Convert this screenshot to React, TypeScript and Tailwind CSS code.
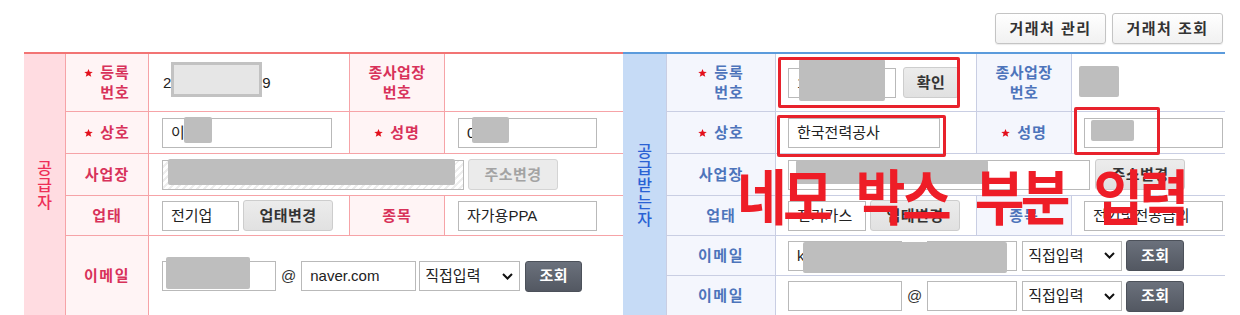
import React from "react";

const FONT = "font-['Liberation_Sans','Noto_Sans_CJK_KR',sans-serif]";

function StarIcon() {
  return (
    <svg width="9" height="8" viewBox="0 0 10 9" className="shrink-0 mr-[7px]">
      <polygon
        points="5,0 6.3,3.1 9.8,3.3 7.1,5.4 8.1,8.8 5,6.9 1.9,8.8 2.9,5.4 0.2,3.3 3.7,3.1"
        fill="#e3101c"
      />
    </svg>
  );
}

type Side = "L" | "R";

function LabelCell({
  side,
  lines,
  star,
  last,
  tracking,
}: {
  side: Side;
  lines: string[];
  star?: boolean;
  last?: boolean;
  tracking?: string;
}) {
  const cls =
    side === "L"
      ? "bg-[#fff4f5] border-[#f6a3a7] text-[#d8325a]"
      : "bg-[#f4f6fd] border-[#c9cee3] text-[#4d74bb]";
  return (
    <div
      className={`flex items-center justify-center border-r ${last ? "" : "border-b"} ${cls}`}
    >
      <div className="flex items-start">
        {star && (
          <span className="flex h-[20px] items-center">
            <StarIcon />
          </span>
        )}
        <div
          className={`text-center text-[15px] font-bold leading-[20px] ${tracking ?? "tracking-[1px]"}`}
        >
          {lines.map((l) => (
            <div key={l}>{l}</div>
          ))}
        </div>
      </div>
    </div>
  );
}

function ValueCell({
  side,
  children,
  span3,
  lastCol,
  last,
  pad,
}: {
  side: Side;
  children?: React.ReactNode;
  span3?: boolean;
  lastCol?: boolean;
  last?: boolean;
  pad?: string;
}) {
  const b = side === "L" ? "border-[#f6a3a7]" : "border-[#c9cee3]";
  return (
    <div
      className={`flex items-center bg-white ${pad ?? (side === "L" ? "pl-[13px]" : "pl-[12px]")} ${span3 ? "col-span-3" : ""} ${lastCol ? "" : "border-r"} ${last ? "" : "border-b"} ${b}`}
    >
      {children}
    </div>
  );
}

function Input({
  w,
  text,
  hatched,
}: {
  w: string;
  text?: string;
  hatched?: boolean;
}) {
  return (
    <div
      className={`flex h-[30px] shrink-0 items-center border border-[#b9b9b9] pl-[8px] text-[15px] leading-[18px] text-[#222] ${w} ${
        hatched
          ? "bg-[repeating-linear-gradient(135deg,#ffffff_0px,#ffffff_3px,#ededed_3px,#ededed_5px)]"
          : "bg-white"
      }`}
    >
      {text}
    </div>
  );
}

function GrayBtn({
  w,
  text,
  disabled,
  ml,
}: {
  w: string;
  text: string;
  disabled?: boolean;
  ml: string;
}) {
  return (
    <div
      className={`flex h-[31px] shrink-0 items-center justify-center rounded-[3px] border text-[15px] font-bold leading-[18px] tracking-[0.5px] ${w} ${ml} ${
        disabled
          ? "border-[#d4d4d4] bg-[#ebebeb] text-[#a3a3a3]"
          : "border-[#cdcdcd] bg-gradient-to-b from-[#ececec] to-[#e1e1e1] text-[#333]"
      }`}
    >
      {text}
    </div>
  );
}

function Select({ w, ml }: { w: string; ml: string }) {
  return (
    <div
      className={`flex h-[30px] shrink-0 items-center justify-between border border-[#b9b9b9] bg-white pl-[5px] pr-[6px] text-[15px] leading-[18px] text-[#222] ${w} ${ml}`}
    >
      <span>직접입력</span>
      <svg width="11" height="7" viewBox="0 0 11 7">
        <path d="M1 1 L5.5 5.5 L10 1" stroke="#111" strokeWidth="2" fill="none" />
      </svg>
    </div>
  );
}

function DarkBtn({ w, ml }: { w: string; ml: string }) {
  return (
    <div
      className={`flex h-[31px] shrink-0 items-center justify-center rounded-[3px] border border-[#4c515a] bg-gradient-to-b from-[#6b717c] to-[#535862] text-[15px] font-bold leading-[18px] tracking-[0.5px] text-white ${w} ${ml}`}
    >
      조회
    </div>
  );
}

function At() {
  return <span className="mx-[5px] text-[15px] leading-[18px] text-[#333]">@</span>;
}

function VHeader({ side, chars }: { side: Side; chars: string[] }) {
  const cls =
    side === "L"
      ? "bg-[#ffdce1] border-[#f6a3a7] text-[#ee2f57] row-span-5"
      : "bg-[#c6dbf6] border-[#c9cee3] text-[#2a62d4] row-span-6";
  return (
    <div className={`flex flex-col items-center justify-center border-r ${cls}`}>
      {chars.map((c, i) => (
        <div key={i} className="text-[16px] font-medium leading-[17px]">
          {c}
        </div>
      ))}
    </div>
  );
}

function Censor({
  x,
  y,
  w,
  h,
}: {
  x: number;
  y: number;
  w: number;
  h: number;
}) {
  return (
    <div
      className="absolute rounded-[2px] bg-[#bebebe]"
      style={{ left: x, top: y, width: w, height: h }}
    />
  );
}

function RedRect({
  x,
  y,
  w,
  h,
}: {
  x: number;
  y: number;
  w: number;
  h: number;
}) {
  return (
    <div
      className="absolute rounded-[2px] border-[3px] border-[#e8222c]"
      style={{ left: x, top: y, width: w, height: h }}
    />
  );
}

export default function App() {
  return (
    <div className={`relative h-[315px] w-[1240px] overflow-hidden bg-white ${FONT}`}>
      {/* top buttons */}
      <div className="flex h-[52px] items-start justify-end gap-[6px] pr-[17px] pt-[13px]">
        {["거래처 관리", "거래처 조회"].map((t) => (
          <div
            key={t}
            className="flex h-[31px] w-[111px] items-center justify-center rounded-[3px] border border-[#c4c4c4] bg-gradient-to-b from-white to-[#f1f1f1] text-[15px] font-bold leading-[18px] tracking-[1.5px] text-[#333] shadow-[0_1px_1px_rgba(0,0,0,0.08)]"
          >
            {t}
          </div>
        ))}
      </div>

      <div className="ml-[24px] flex">
        {/* LEFT: 공급자 */}
        <div className="grid w-[599px] grid-cols-[42px_83px_201px_95px_178px] grid-rows-[58px_42px_42px_40px_80px] border-t-2 border-[#f27474]">
          <VHeader side="L" chars={["공", "급", "자"]} />

          <LabelCell side="L" star lines={["등록", "번호"]} />
          <ValueCell side="L" pad="pl-[14px]">
            <span className="text-[15px] leading-[18px] text-[#222]">2</span>
            <span className="mt-[-7px] h-[35px] w-[91px] shrink-0 border-[3px] border-[#c2c2c2] bg-[#e6e6e6]" />
            <span className="text-[15px] leading-[18px] text-[#222]">9</span>
          </ValueCell>
          <LabelCell side="L" lines={["종사업장", "번호"]} tracking="tracking-[0.5px]" />
          <ValueCell side="L" lastCol />

          <LabelCell side="L" star lines={["상호"]} />
          <ValueCell side="L">
            <Input w="w-[170px]" text="이" />
          </ValueCell>
          <LabelCell side="L" star lines={["성명"]} />
          <ValueCell side="L" lastCol>
            <Input w="w-[139px]" text="0" />
          </ValueCell>

          <LabelCell side="L" lines={["사업장"]} />
          <ValueCell side="L" span3 lastCol>
            <Input w="w-[302px]" hatched text="" />
            <GrayBtn w="w-[90px]" ml="ml-[4px]" text="주소변경" disabled />
          </ValueCell>

          <LabelCell side="L" lines={["업태"]} />
          <ValueCell side="L">
            <Input w="w-[77px]" text="전기업" />
            <GrayBtn w="w-[90px]" ml="ml-[4px]" text="업태변경" />
          </ValueCell>
          <LabelCell side="L" lines={["종목"]} />
          <ValueCell side="L" lastCol>
            <Input w="w-[139px]" text="자가용PPA" />
          </ValueCell>

          <LabelCell side="L" lines={["이메일"]} last tracking="tracking-[1.5px]" />
          <ValueCell side="L" span3 lastCol last>
            <Input w="w-[114px]" />
            <At />
            <Input w="w-[115px]" text="naver.com" />
            <Select w="w-[101px]" ml="ml-[3px]" />
            <DarkBtn w="w-[57px]" ml="ml-[5px]" />
          </ValueCell>
        </div>

        {/* RIGHT: 공급받는자 */}
        <div className="grid w-[602px] grid-cols-[44px_109px_201px_95px_153px] grid-rows-[58px_42px_42px_40px_40px_40px] border-t-2 border-[#5b9bdc]">
          <VHeader side="R" chars={["공", "급", "받", "는", "자"]} />

          <LabelCell side="R" star lines={["등록", "번호"]} />
          <ValueCell side="R">
            <Input w="w-[108px]" text="1" />
            <GrayBtn w="w-[56px]" ml="ml-[7px]" text="확인" />
          </ValueCell>
          <LabelCell side="R" lines={["종사업장", "번호"]} tracking="tracking-[0.5px]" />
          <ValueCell side="R" lastCol />

          <LabelCell side="R" star lines={["상호"]} />
          <ValueCell side="R">
            <Input w="w-[152px]" text="한국전력공사" />
          </ValueCell>
          <LabelCell side="R" star lines={["성명"]} />
          <ValueCell side="R" lastCol>
            <Input w="w-[139px]" />
          </ValueCell>

          <LabelCell side="R" lines={["사업장"]} />
          <ValueCell side="R" span3 lastCol>
            <Input w="w-[302px]" />
            <GrayBtn w="w-[90px]" ml="ml-[5px]" text="주소변경" />
          </ValueCell>

          <LabelCell side="R" lines={["업태"]} />
          <ValueCell side="R">
            <Input w="w-[78px]" text="전기가스" />
            <GrayBtn w="w-[90px]" ml="ml-[4px]" text="업태변경" />
          </ValueCell>
          <LabelCell side="R" lines={["종목"]} />
          <ValueCell side="R" lastCol>
            <Input w="w-[139px]" text="전기및전공급외" />
          </ValueCell>

          <LabelCell side="R" lines={["이메일"]} tracking="tracking-[1.5px]" />
          <ValueCell side="R" span3 lastCol>
            <Input w="w-[114px]" text="k" />
            <At />
            <Input w="w-[90px]" />
            <Select w="w-[100px]" ml="ml-[5px]" />
            <DarkBtn w="w-[58px]" ml="ml-[4px]" />
          </ValueCell>

          <LabelCell side="R" lines={["이메일"]} last tracking="tracking-[1.5px]" />
          <ValueCell side="R" span3 lastCol last>
            <Input w="w-[114px]" />
            <At />
            <Input w="w-[90px]" />
            <Select w="w-[100px]" ml="ml-[5px]" />
            <DarkBtn w="w-[58px]" ml="ml-[4px]" />
          </ValueCell>
        </div>
      </div>

      {/* redaction overlays */}
      <Censor x={184} y={117} w={28} h={26} />
      <Censor x={472} y={117} w={37} h={26} />
      <Censor x={168} y={159} w={287} h={26} />
      <Censor x={166} y={257} w={84} h={32} />
      <Censor x={799} y={59} w={86} h={42} />
      <Censor x={1079} y={66} w={40} h={31} />
      <Censor x={1091} y={120} w={43} h={21} />
      <Censor x={796} y={160} w={192} h={24} />
      <Censor x={803} y={242} w={204} h={31} />

      {/* annotation rectangles */}
      <RedRect x={778} y={57} w={182} h={51} />
      <RedRect x={777} y={115} w={169} h={42} />
      <RedRect x={1074} y={107} w={86} h={48} />

      {/* annotation text */}
      <div className="absolute left-[737px] top-[164px] origin-left scale-x-[0.9] whitespace-nowrap font-['Noto_Sans_CJK_KR',sans-serif] text-[60px] font-bold leading-[60px] tracking-[-4px] text-[#ee1d27] [word-spacing:20px]">
        네모 박스 부분 입력
      </div>
    </div>
  );
}
